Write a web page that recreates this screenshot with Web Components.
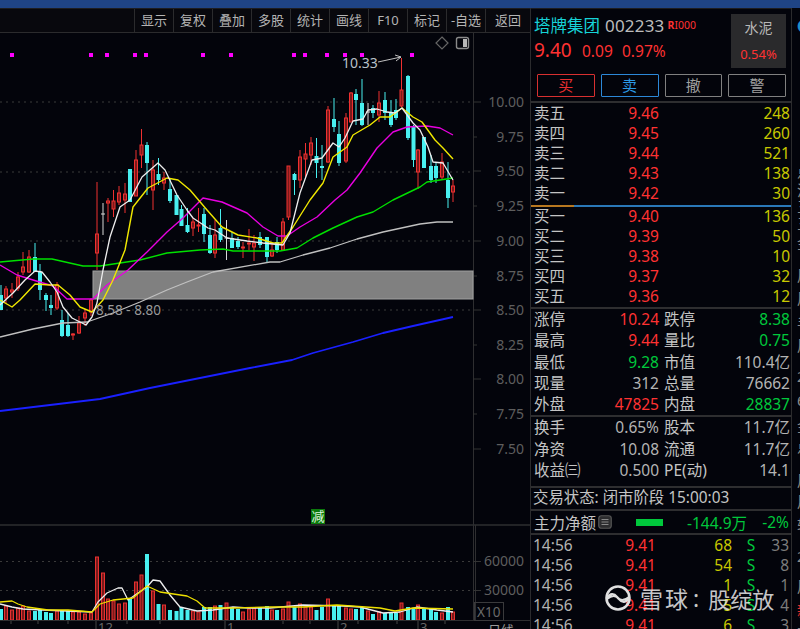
<!DOCTYPE html>
<html lang="zh">
<head>
<meta charset="utf-8">
<title>塔牌集团 002233</title>
<style>
  html, body { margin: 0; height: 100%; background: #03040b; overflow: hidden; }
</style>
</head>
<body>
<stock-app></stock-app>
<script>
const FONT = `"Noto Sans", "Noto Sans CJK SC", sans-serif`;
const RED = "#ff3232";
const GREEN = "#00c83c";
const YELLOW = "#c8c800";
const TEXT = "#c4c4c4";

// x, high, body top, body bottom, low, colour, volume bar top (page pixels)
const CANDLES = [
  [1,285,295,310,310,"c",609],[6,286,289,298,303,"r",606],[12,283,290,292,298,"r",610],[18,272,277,288,291,"r",608],
  [23,252,267,272,275,"r",606],[29,250,257,272,273,"r",611],[35,243,257,272,272,"c",611],[40,264,272,290,300,"c",609],
  [46,293,295,300,311,"c",612],[51,295,305,308,315,"c",613],[57,282,285,308,310,"r",611],[62,310,320,336,337,"c",611],
  [68,313,325,336,337,"c",611],[73,333,334,335,340,"r",612],[79,316,323,333,334,"r",612],[85,309,313,318,326,"r",614],
  [91,298,300,312,316,"r",613],[97,182,234,253,270,"r",557],[103,203,214,215,235,"w",573],[108,198,201,203,222,"r",599],
  [113.5,190,201,209,217,"r",601],[119,186,193,202,205,"r",604],[125,183,194,200,213,"r",603],[130,169,169,202,202,"c",598],
  [136,150,160,196,196,"r",582],[141.5,129,145,155,168,"r",575],[147,142,145,163,195,"c",554],[153,160,170,190,210,"r",591],
  [158.5,158,174,180,185,"c",604],[164,172,178,183,190,"r",605],[170,178,189,201,203,"c",610],[176.5,195,195,215,215,"c",611],
  [181.5,205,209,226,226,"c",607],[187.5,208,225,232,233,"c",610],[193,218,222,228,236,"r",611],[198.5,208,225,226,232,"r",612],
  [204,208,214,234,242,"c",607],[210,225,235,253,254,"c",607],[215,220,235,253,258,"r",606],[220.5,209,228,240,242,"c",605],
  [226.5,220,238,239,260,"w",603],[232,232,238,248,248,"c",607],[238,237,241,247,249,"c",609],[243,242,247,248,258,"r",612],
  [249,229,243,244,250,"r",609],[254,235,243,247,261,"r",608],[260,232,237,245,248,"c",607],[267,237,237,257,262,"c",606],
  [272,243,250,256,257,"r",610],[277,237,242,250,253,"c",610],[283,218,222,250,251,"r",609],[288.5,166,166,217,220,"r",602],
  [294.5,173,174,180,195,"c",607],[300,150,157,180,188,"r",604],[305.5,143,154,159,178,"r",607],[311,137,143,155,165,"r",607],
  [316.5,138,156,163,178,"c",610],[322,145,166,168,180,"c",607],[328,106,110,162,163,"r",599],[334,98,119,127,132,"c",606],
  [339,121,134,163,166,"c",606],[346,113,118,161,163,"r",608],[351,92,93,122,122,"r",609],[356,89,94,100,125,"c",609],
  [362,79,103,125,126,"c",608],[368,103,112,113,125,"w",611],[373,105,108,113,118,"c",614],[379,91,103,115,122,"r",612],
  [385,92,100,113,120,"c",613],[391,100,112,125,127,"c",613],[396,99,110,118,120,"c",613],[401.5,58,90,106,107,"r",603],
  [408,75,76,138,140,"c",607],[413.5,125,127,160,167,"c",609],[418,149,150,172,189,"r",605],[424,137,137,168,168,"c",608],
  [431,155,166,180,183,"c",608],[436,163,166,178,183,"c",612],[442,153,162,177,180,"r",613],[448,162,180,198,208,"c",607],
  [453,180,186,192,202,"r",612]
];

const LINES = [
  ["#1a20ff", "0,411 50,405 100,399 150,388 200,378 250,368 292,360 313,353 353,342 383,333 413,326 453,317", 1.8],
  ["#c0c0c0", "0,337 33,329 63,323 87,322 113,313 140,302 167,290 187,282 213,272 270,262 280,262 303,255 330,248 357,239 383,232 420,224 437,222 453,222", 1.3],
  ["#00e000", "0,262 33,259 52,259 83,266 100,266 120,263 140,260 167,253 200,250 223,249 233,251 280,251 297,248 313,238 333,228 357,217 373,212 393,200 420,187 427,182 453,178", 1.4],
  ["#e800e0", "0,265 17,275 33,280 53,286 67,299 93,299 107,285 128,270 147,252 167,232 183,218 203,198 222,202 247,213 263,227 278,236 287,236 300,227 317,217 335,200 347,190 360,173 377,148 393,132 407,127 427,126 440,128 453,135", 1.4],
  ["#f0e800", "0,300 12,307 20,300 35,284 50,285 58,285 70,295 80,307 92,312 103,300 113,280 125,250 133,207 148,188 167,178 178,180 190,190 207,210 222,227 238,235 257,238 273,243 282,243 293,227 310,200 323,183 333,157 347,147 353,135 370,125 380,117 390,117 402,108 413,117 422,122 435,140 443,148 453,159", 1.4],
  ["#eeeeee", "0,305 13,293 25,280 35,271 42,272 50,282 57,292 63,307 72,318 86,325 92,317 97,303 103,270 110,237 120,207 130,200 142,177 158,163 165,170 177,195 187,210 193,218 208,228 215,230 227,238 247,241 263,243 283,245 290,233 300,193 312,160 322,158 333,143 339,147 345,138 353,121 363,119 368,110 377,109 387,112 395,113 402,108 413,123 420,130 428,147 433,162 443,163 453,180", 1.3]
];

const VOL_LINES = [
  ["#eeeeee", "0,604 12,607 23,609 43,610 67,611 92,612 98,602 107,593 118,588 122,588 128,600 138,593 147,587 153,580 160,581 170,595 180,607 197,611 213,610 233,607 248,608 270,608 303,605 343,606 360,607 383,613 400,612 417,607 437,610 453,612"],
  ["#eee000", "0,602 12,601 18,604 27,607 48,610 68,610 92,612 100,604 113,600 133,598 147,586 160,592 187,596 197,601 205,608 233,608 270,607 303,607 337,605 380,608 395,611 413,608 453,609"]
];

class StockApp extends HTMLElement {
  constructor() {
    super();
    this.attachShadow({ mode: "open" });
  }

  connectedCallback() {
    this.shadowRoot.innerHTML = `
      <style>
        :host { display: flex; flex-direction: column; width: 800px; height: 629px; overflow: hidden; font-family: ${FONT}; }
        .title { height: 8px; background: #1f4485; flex: none; }
        .main { display: flex; flex: 1; min-height: 0; }
      </style>
      <div class="title"></div>
      <div class="main">
        <chart-pane></chart-pane>
        <quote-panel></quote-panel>
        <edge-strip></edge-strip>
      </div>
    `;
  }
}

class ChartToolbar extends HTMLElement {
  constructor() {
    super();
    this.attachShadow({ mode: "open" });
  }

  connectedCallback() {
    const items = ["显示", "复权", "叠加", "多股", "统计", "画线", "F10", "标记", "-自选", "返回"];
    this.shadowRoot.innerHTML = `
      <style>
        :host { display: flex; justify-content: flex-end; height: 23px; border-top: 1px solid #1d1d20; border-bottom: 1px solid #2b2b2d; background: #08080d; }
        span { width: 38px; border-left: 1px solid #2b2b2d; text-align: center; font-size: 13px; line-height: 23px; color: #b4b4b4; }
        span:first-child { border-left: 2px solid #2b2b2d; }
        span:last-child { width: 44px; }
      </style>
      ${items.map((t) => `<span>${t}</span>`).join("")}
    `;
  }
}

class KlineChart extends HTMLElement {
  constructor() {
    super();
    this.attachShadow({ mode: "open" });
  }

  connectedCallback() {
    const poly = (pts, color, w) => `<polyline points="${pts}" fill="none" stroke="${color}" stroke-width="${w}" stroke-linejoin="round"/>`;
    const dots = [12, 91, 107, 135, 146, 203, 231, 294, 305, 327, 345, 362, 412]
      .map((x) => `<rect x="${x - 2}" y="53" width="4" height="4" fill="#ff00ff"/>`).join("");
    const grid = [102, 172, 241, 310, 561.5, 590.5]
      .map((y) => `<line x1="0" x2="473" y1="${y}" y2="${y}" stroke="#3a3a3a" stroke-dasharray="2 4"/>`).join("");
    const axis = [["10.00", 102], ["9.75", 137], ["9.50", 171], ["9.25", 206], ["9.00", 241], ["8.75", 276], ["8.50", 310], ["8.25", 345], ["8.00", 379], ["7.75", 414], ["7.50", 449]]
      .map(([t, y], i) => `<line x1="473" x2="${i % 2 ? 477 : 481}" y1="${y}" y2="${y}" stroke="#333"/><text x="524" y="${y + 5}" text-anchor="end" font-size="14" fill="#5e5e5e">${t}</text>`).join("");
    const candles = CANDLES.map(([x, hi, top, bot, lo, c]) => {
      if (c === "w") {
        return `<line x1="${x}" x2="${x}" y1="${hi}" y2="${lo}" stroke="#d8d8d8"/><line x1="${x - 2}" x2="${x + 2}" y1="${top}" y2="${top}" stroke="#d8d8d8"/>`;
      }
      if (c === "c") {
        return `<line x1="${x}" x2="${x}" y1="${hi}" y2="${lo}" stroke="#48f0f0"/><rect x="${x - 2}" y="${top}" width="4" height="${bot - top}" fill="#48f0f0"/>`;
      }
      return `<line x1="${x}" x2="${x}" y1="${hi}" y2="${top}" stroke="#f03030"/><line x1="${x}" x2="${x}" y1="${bot}" y2="${lo}" stroke="#f03030"/><rect x="${x - 1.5}" y="${top}" width="3" height="${bot - top}" fill="#7a1a1a" stroke="#f03030"/>`;
    }).join("");
    const bars = CANDLES.map(([x, , , , , c, vol]) => c === "c"
      ? `<rect x="${x - 2}" y="${vol}" width="4" height="${620 - vol}" fill="#48f0f0"/>`
      : `<rect x="${x - 1.5}" y="${vol}" width="3" height="${620 - vol}" fill="#7a1a1a" stroke="#e83030"/>`).join("");
    const ticks = [11, 38, 68, 127, 160, 283, 310, 358, 397, 445]
      .map((x) => `<line x1="${x}" x2="${x}" y1="621" y2="624" stroke="#444"/>`).join("");
    const dates = [[96, "12"], [225, "1"], [338, "2"], [418, "3"]]
      .map(([x, t]) => `<line x1="${x}" x2="${x}" y1="621" y2="629" stroke="#444"/><text x="${x + 2}" y="632" font-size="13" fill="#666">${t}</text>`).join("");

    this.shadowRoot.innerHTML = `
      <style>
        :host { display: block; flex: 1; min-height: 0; overflow: hidden; }
        svg { display: block; font-family: ${FONT}; }
      </style>
      <svg width="530" height="597" viewBox="0 33 530 597">
        ${grid}
        ${dots}
        <line x1="473.5" x2="473.5" y1="33" y2="620" stroke="#2e2e30"/>
        ${axis}
        <path d="M442 37l6 6-6 6-6-6z" fill="none" stroke="#666" stroke-width="1.2"/>
        <rect x="456.5" y="37.5" width="12" height="11" rx="2" fill="none" stroke="#8a8a8a" stroke-width="1.4"/>
        <rect x="463" y="39" width="4" height="8" fill="#b8b8b8"/>
        <rect x="93" y="271" width="380" height="28" fill="#808080" stroke="#a0a0a0" stroke-width="1"/>
        ${candles}
        ${LINES.map(([c, p, w]) => poly(p, c, w)).join("")}
        <text x="96" y="315" font-size="13.5" fill="#9a9a9a">8.58 - 8.80</text>
        <text x="342" y="68" font-size="14" fill="#b8c0c8">10.33</text>
        <path d="M378 62L401 57M395 55l6 2-5 4" fill="none" stroke="#c0c0c0" stroke-width="1"/>
        <line x1="0" x2="530" y1="525" y2="525" stroke="#2e2e30" stroke-width="1.4"/>
        ${bars}
        ${VOL_LINES.map(([c, p]) => poly(p, c, 1.3)).join("")}
        <line x1="0" x2="530" y1="620.5" y2="620.5" stroke="#2e2e30"/>
        <rect x="311" y="509" width="14" height="15" fill="#0c7a0c"/>
        <text x="318" y="521" text-anchor="middle" font-size="13" fill="#dff5df">减</text>
        <line x1="475.5" x2="475.5" y1="525" y2="620" stroke="#2e2e30"/>
        <text x="524" y="566" text-anchor="end" font-size="14" fill="#5e5e5e">60000</text>
        <line x1="473" x2="481" y1="561.5" y2="561.5" stroke="#333"/>
        <text x="524" y="595" text-anchor="end" font-size="14" fill="#5e5e5e">30000</text>
        <line x1="473" x2="481" y1="590.5" y2="590.5" stroke="#333"/>
        <rect x="474.5" y="602.5" width="29" height="18" fill="none" stroke="#3a3a3c"/>
        <text x="477" y="617" font-size="13.5" fill="#6a6a6a">X10</text>
        ${ticks}
        ${dates}
        <text x="488" y="635" font-size="13" fill="#9a9a9a">日线</text>
      </svg>
    `;
  }
}

class ChartPane extends HTMLElement {
  constructor() {
    super();
    this.attachShadow({ mode: "open" });
  }

  connectedCallback() {
    this.shadowRoot.innerHTML = `
      <style>
        :host { display: flex; flex-direction: column; width: 530px; flex: none; }
      </style>
      <chart-toolbar></chart-toolbar>
      <kline-chart></kline-chart>
    `;
  }
}

class QuoteHeader extends HTMLElement {
  constructor() {
    super();
    this.attachShadow({ mode: "open" });
  }

  connectedCallback() {
    this.shadowRoot.innerHTML = `
      <style>
        :host { display: block; height: 92px; border-top: 1px solid #1d1d20; border-bottom: 2px solid #2e2e30; }
        .top { display: flex; height: 57px; padding: 6px 5px 0 3px; justify-content: space-between; }
        .name { display: flex; align-items: center; height: 20px; white-space: nowrap; }
        .cn { font-size: 16.5px; color: #16d3d8; }
        .code { font-size: 17px; color: #bcbcbc; margin-left: 5px; letter-spacing: .2px; }
        .tag { font-size: 10.5px; color: ${RED}; margin-left: 3px; }
        .tag b { font-weight: 700; }
        .price { display: flex; align-items: baseline; margin-top: 2px; color: ${RED}; font-size: 15.5px; white-space: nowrap; }
        .price b { font-weight: 400; font-size: 19px; width: 48px; }
        .price span { width: 40px; }
        .price i { font-style: normal; }
        .sector { width: 55px; height: 54px; margin-top: -1px; background: #2a2a2c; display: flex; flex-direction: column; align-items: center; }
        .sector span { font-size: 14px; color: #b8b8b8; line-height: 20px; margin-top: 4px; }
        .sector i { font-style: normal; font-size: 13px; color: ${RED}; line-height: 18px; margin-top: 7px; }
        .btns { display: flex; gap: 6px; padding: 2px 5px 0 6px; }
        .btns span { flex: 1; height: 21px; border: 1.5px solid #808080; border-radius: 1px; text-align: center; font-size: 15px; line-height: 21px; color: #a0a0a0; }
        .btns .buy { border-color: #d83030; color: #e83030; }
        .btns .sell { border-color: #2c88d8; color: #2c9ae8; }
      </style>
      <div class="top">
        <div>
          <div class="name"><span class="cn">塔牌集团</span><span class="code">002233</span><span class="tag"><b>R</b>I000</span></div>
          <div class="price"><b>9.40</b><span>0.09</span><i>0.97%</i></div>
        </div>
        <div class="sector"><span>水泥</span><i>0.54%</i></div>
      </div>
      <div class="btns"><span class="buy">买</span><span class="sell">卖</span><span>撤</span><span>警</span></div>
    `;
  }
}

class OrderRow extends HTMLElement {
  constructor() {
    super();
    this.attachShadow({ mode: "open" });
  }

  connectedCallback() {
    this.shadowRoot.innerHTML = `
      <style>
        :host { display: grid; grid-template-columns: 40px 85px 1fr; height: 20px; padding: 0 1px 0 3px; font-size: 15.5px; line-height: 20px; color: ${TEXT}; white-space: nowrap; }
        .p { text-align: right; color: ${RED}; }
        .q { text-align: right; color: ${YELLOW}; }
      </style>
      <span>${this.getAttribute("label")}</span>
      <span class="p">${this.getAttribute("price")}</span>
      <span class="q">${this.getAttribute("qty")}</span>
    `;
  }
}

class StatRow extends HTMLElement {
  constructor() {
    super();
    this.attachShadow({ mode: "open" });
  }

  connectedCallback() {
    const a = this.getAttribute("a").split("|");
    const b = this.getAttribute("b").split("|");
    this.shadowRoot.innerHTML = `
      <style>
        :host { display: grid; grid-template-columns: 40px 85px 45px 1fr; height: var(--row-h, 21px); padding: 0 1px 0 3px; font-size: 15.5px; line-height: var(--row-h, 21px); color: ${TEXT}; white-space: nowrap; }
        .v { text-align: right; }
        .l2 { padding-left: 5px; }
      </style>
      <span>${a[0]}</span><span class="v" style="color:${a[2] || "#b4b4b4"}">${a[1]}</span>
      <span class="l2">${b[0]}</span><span class="v" style="color:${b[2] || "#b4b4b4"}">${b[1]}</span>
    `;
  }
}

class PanelSection extends HTMLElement {
  constructor() {
    super();
    this.attachShadow({ mode: "open" });
  }

  connectedCallback() {
    this.shadowRoot.innerHTML = `
      <style>
        :host { display: block; border-bottom: 2px solid #2e2e30; }
      </style>
      <slot></slot>
    `;
  }
}

class TradeRow extends HTMLElement {
  constructor() {
    super();
    this.attachShadow({ mode: "open" });
  }

  connectedCallback() {
    const [time, price, qty, side, count] = this.textContent.trim().split(/\s+/);
    this.shadowRoot.innerHTML = `
      <style>
        :host { display: grid; grid-template-columns: 37px 86px 76px 38px 19px; height: 20px; padding: 0 2px 0 2px; font-size: 15.5px; line-height: 20px; color: #b4b4b4; white-space: nowrap; }
        .p { text-align: right; color: ${RED}; }
        .q { text-align: right; color: ${YELLOW}; }
        .s { text-align: center; color: ${GREEN}; }
        .c { text-align: right; color: #7c7c7c; }
      </style>
      <span>${time}</span><span class="p">${price}</span><span class="q">${qty}</span><span class="s">${side}</span><span class="c">${count}</span>
    `;
  }
}

class QuotePanel extends HTMLElement {
  constructor() {
    super();
    this.attachShadow({ mode: "open" });
  }

  connectedCallback() {
    const asks = [["卖五", "9.46", 248], ["卖四", "9.45", 260], ["卖三", "9.44", 521], ["卖二", "9.43", 138], ["卖一", "9.42", 30]];
    const bids = [["买一", "9.40", 136], ["买二", "9.39", 50], ["买三", "9.38", 10], ["买四", "9.37", 32], ["买五", "9.36", 12]];
    const row = ([l, p, q]) => `<order-row label="${l}" price="${p}" qty="${q}"></order-row>`;
    this.shadowRoot.innerHTML = `
      <style>
        :host { display: block; position: relative; width: 260px; flex: none; border-left: 1px solid #2b2b2d; border-right: 1px solid #2b2b2d; overflow: hidden; }
        .split { height: 2px; margin: 2px 0 -1px; background: linear-gradient(90deg, #b87820 43px, #2a78b8 43px); }
        .bids { display: block; height: 101px; }
        .gap { height: 5px; }
        .status { display: block; height: 21px; padding: 0 0 0 2px; font-size: 15.4px; line-height: 20px; color: ${TEXT}; white-space: nowrap; }
        .flow { display: flex; align-items: center; height: 22px; padding: 0 2px 0 3px; font-size: 15.5px; color: ${TEXT}; white-space: nowrap; }
        .flow svg { margin-left: 2px; }
        .flow .bar { width: 27px; height: 7px; margin-left: 24px; background: #00c83c; }
        .flow .g { color: ${GREEN}; text-align: right; }
        .mark { position: absolute; left: 74px; top: 573px; display: flex; align-items: center; color: rgba(235,235,235,.85); font-size: 23px; white-space: nowrap; pointer-events: none; }
        .mark .xq { letter-spacing: 2px; margin-left: 9px; }
        .mark .col { margin-left: 3px; }
        .mark .gl { margin-left: 9px; font-size: 22px; }
      </style>
      <quote-header></quote-header>
      <div>${asks.map(row).join("")}</div>
      <div class="split"></div>
      <panel-section>
        <div class="bids">${bids.map(row).join("")}</div>
      </panel-section>
      <panel-section style="--row-h:21.3px">
        <stat-row a="涨停|10.24|${RED}" b="跌停|8.38|${GREEN}"></stat-row>
        <stat-row a="最高|9.44|${RED}" b="量比|0.75|${GREEN}"></stat-row>
        <stat-row a="最低|9.28|${GREEN}" b="市值|110.4亿"></stat-row>
        <stat-row a="现量|312" b="总量|76662"></stat-row>
        <stat-row a="外盘|47825|${RED}" b="内盘|28837|${GREEN}"></stat-row>
      </panel-section>
      <panel-section style="--row-h:21.3px">
        <stat-row a="换手|0.65%" b="股本|11.7亿"></stat-row>
        <stat-row a="净资|10.08" b="流通|11.7亿"></stat-row>
        <stat-row a="收益㈢|0.500" b="PE(动)|14.1"></stat-row>
        <div class="gap"></div>
      </panel-section>
      <panel-section><div class="status">交易状态: 闭市阶段 15:00:03</div></panel-section>
      <panel-section>
        <div class="flow">
          <span>主力净额</span>
          <svg width="14" height="14" viewBox="0 0 14 14"><rect x=".75" y=".75" width="12.5" height="12.5" rx="2.5" fill="#2c2c2e" stroke="#555" stroke-width="1.2"/><path d="M3.5 4.5h7M3.5 7h7M3.5 9.5h7" stroke="#888" stroke-width="1"/></svg>
          <span class="bar"></span>
          <span class="g" style="width:84px">-144.9万</span>
          <span class="g" style="width:42px">-2%</span>
        </div>
      </panel-section>
      <div>
        <trade-row>14:56 9.41 68 S 33</trade-row>
        <trade-row>14:56 9.41 54 S 8</trade-row>
        <trade-row>14:56 9.41 1 S 1</trade-row>
        <trade-row>14:56 9.41 5 S 4</trade-row>
        <trade-row>14:56 9.41 6 S 3</trade-row>
      </div>
      <div class="mark">
        <svg width="26" height="28" viewBox="0 0 26 28" fill="none" stroke="#e0e0e0" stroke-width="2.6">
          <circle cx="13" cy="14" r="11.5"/>
          <path d="M2 14c3-5 7-5 10-1s7 4 12 0M24 14c-3 5-7 5-10 1s-7-4-12 0" stroke-width="2.2"/>
        </svg>
        <span class="xq">雪球</span><span class="col">:</span><span class="gl">股绽放</span>
      </div>
    `;
  }
}

class EdgeStrip extends HTMLElement {
  constructor() {
    super();
    this.attachShadow({ mode: "open" });
  }

  connectedCallback() {
    const items = [[9, ""], [18, "●", "#1e90c8"], [163, "点"], [182, "沪"], [198, "三"], [215, "三"], [235, "金"], [267, "周"], [290, "周"], [315, "手"], [337, "周"], [368, "2"], [392, "6"], [418, "金"], [438, "点"], [472, "周"], [493, "用"], [517, "转"], [548, "2"], [578, "周"], [602, "新", "#e03030"], [625, "新"]];
    const html = items.map(([y, ch, color], i) => {
      const next = items[i + 1] ? items[i + 1][0] : 640;
      return `<div style="height:${next - y}px;color:${color || "#8c8c8c"}">${ch}</div>`;
    }).join("");
    this.shadowRoot.innerHTML = `
      <style>
        :host { display: block; flex: 1; overflow: hidden; padding: 0 0 0 5px; font-size: 15px; white-space: nowrap; }
        div { line-height: 16px; }
      </style>
      <div style="height:1px"></div>
      ${html}
    `;
  }
}

customElements.define("stock-app", StockApp);
customElements.define("chart-toolbar", ChartToolbar);
customElements.define("kline-chart", KlineChart);
customElements.define("chart-pane", ChartPane);
customElements.define("quote-header", QuoteHeader);
customElements.define("order-row", OrderRow);
customElements.define("stat-row", StatRow);
customElements.define("panel-section", PanelSection);
customElements.define("trade-row", TradeRow);
customElements.define("quote-panel", QuotePanel);
customElements.define("edge-strip", EdgeStrip);
</script>
</body>
</html>
